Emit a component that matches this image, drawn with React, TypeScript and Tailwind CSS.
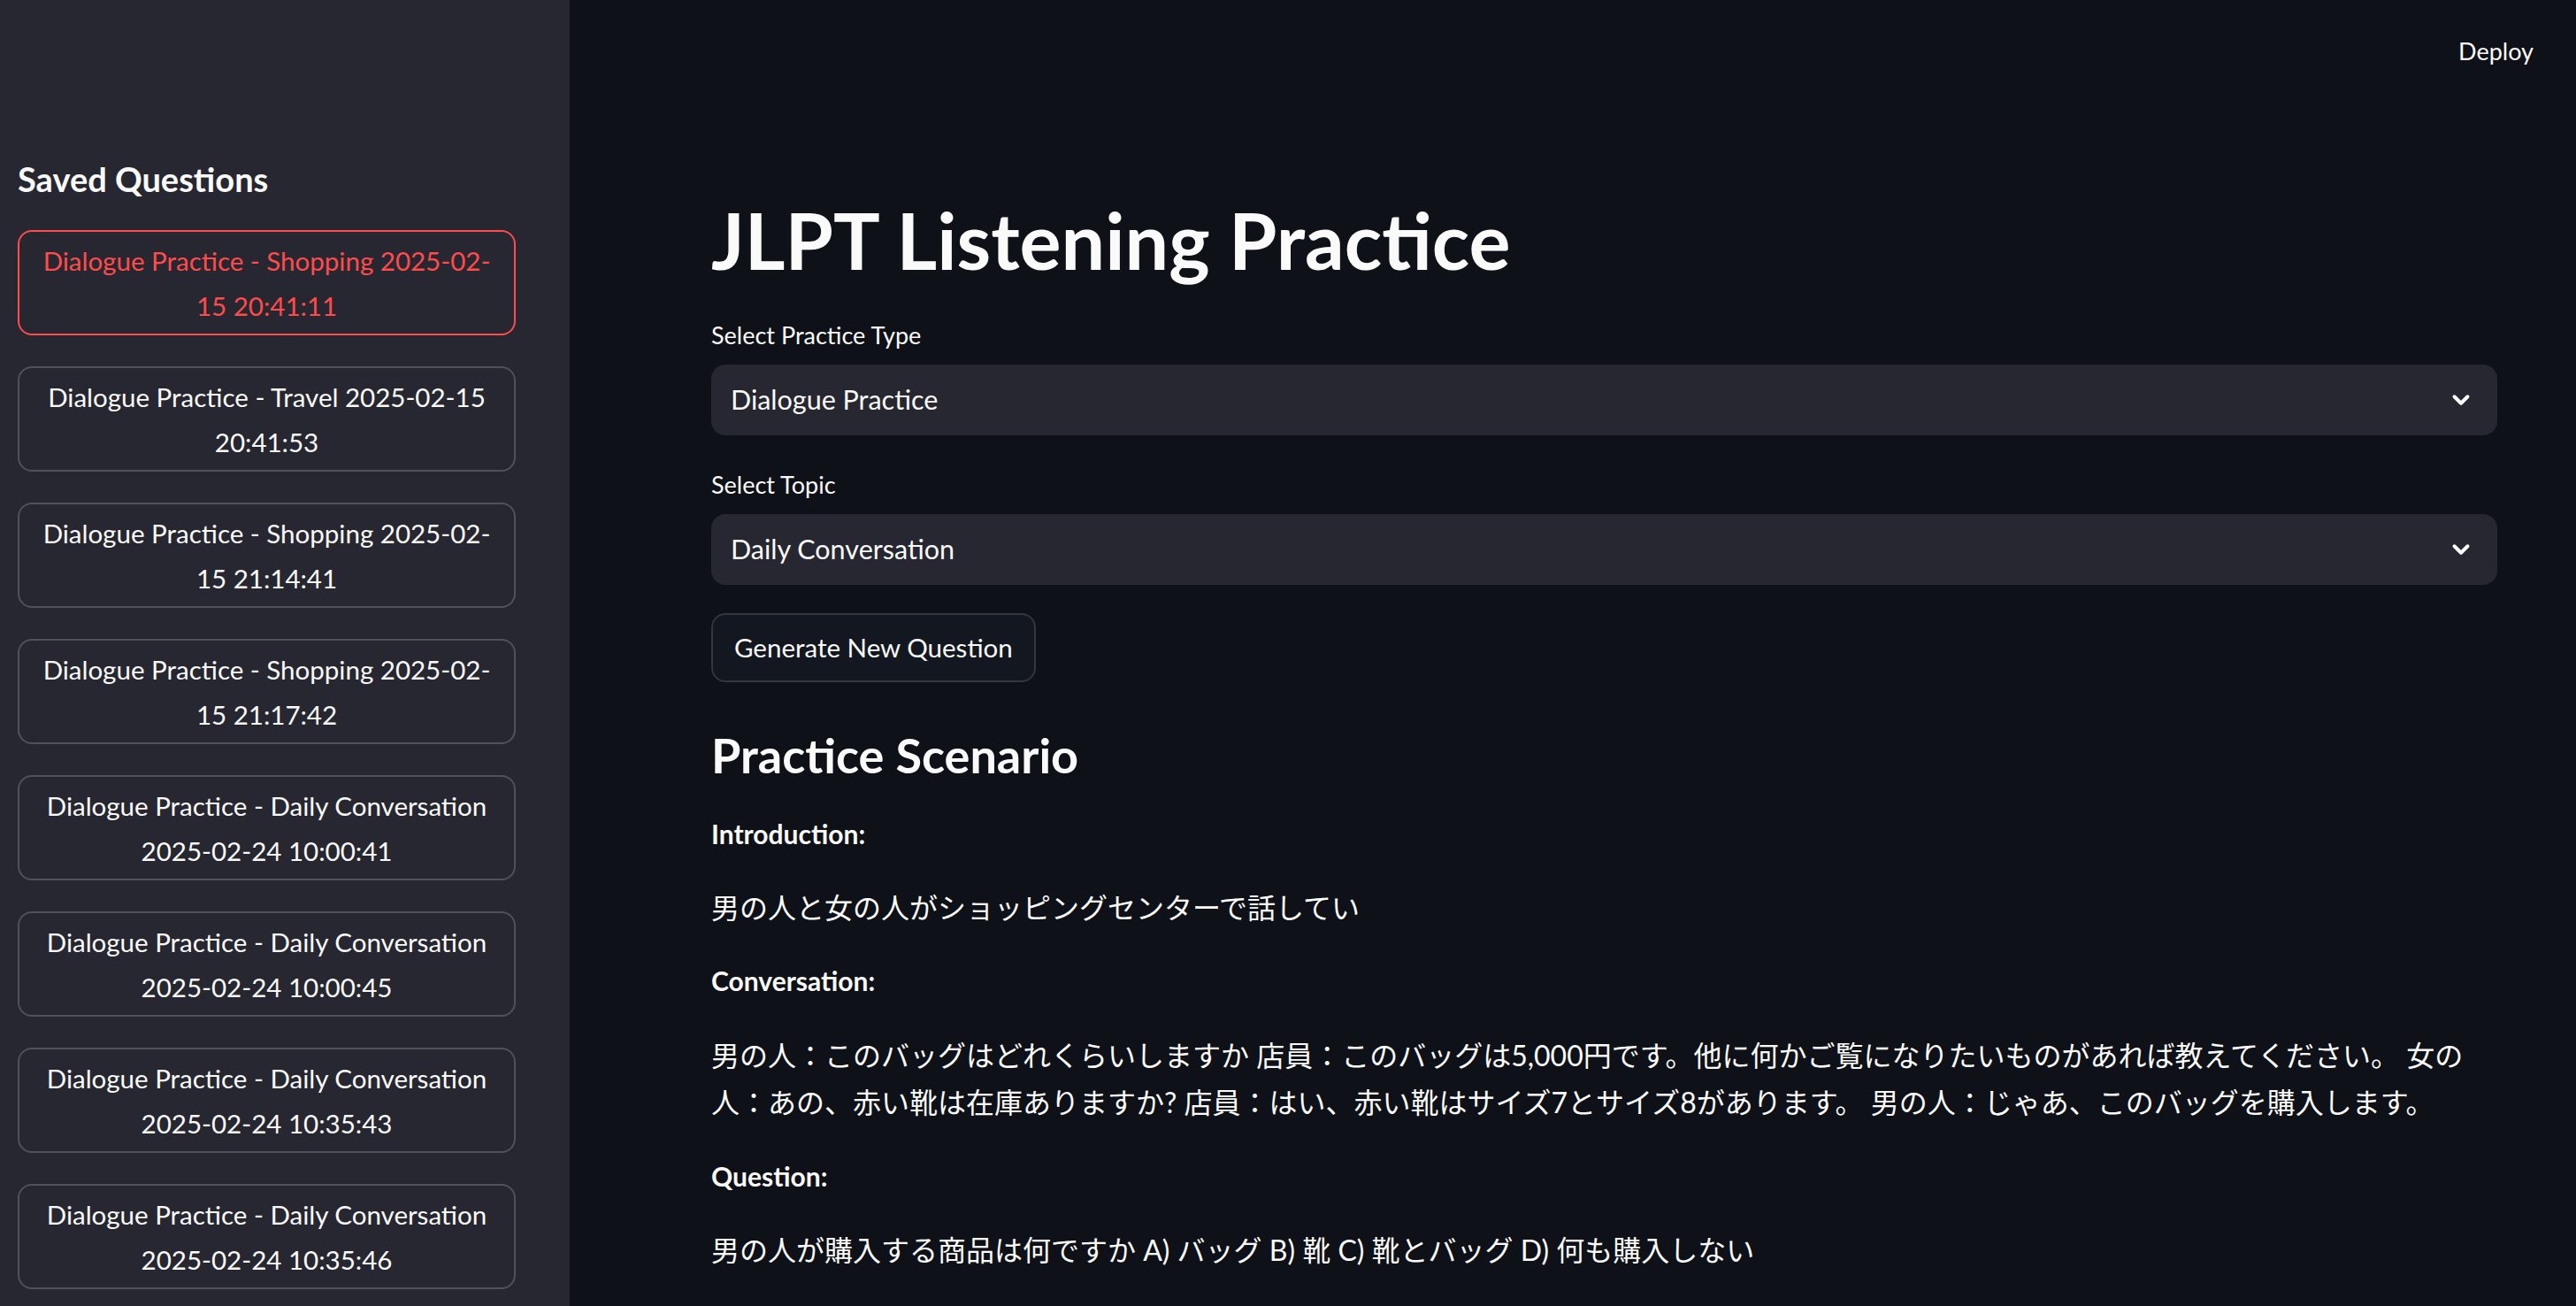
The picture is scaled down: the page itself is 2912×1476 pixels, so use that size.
import React from 'react';
import { ChevronDown } from 'lucide-react';

const saved = [
  ['Dialogue Practice - Shopping 2025-02-', '15 20:41:11'],
  ['Dialogue Practice - Travel 2025-02-15', '20:41:53'],
  ['Dialogue Practice - Shopping 2025-02-', '15 21:14:41'],
  ['Dialogue Practice - Shopping 2025-02-', '15 21:17:42'],
  ['Dialogue Practice - Daily Conversation', '2025-02-24 10:00:41'],
  ['Dialogue Practice - Daily Conversation', '2025-02-24 10:00:45'],
  ['Dialogue Practice - Daily Conversation', '2025-02-24 10:35:43'],
  ['Dialogue Practice - Daily Conversation', '2025-02-24 10:35:46'],
];

const font = "font-['Lato','Noto_Sans_CJK_JP',sans-serif]";

const Select: React.FC<{ label: string; value: string }> = ({ label, value }) => (
  <div className="flex flex-col">
    <div className="h-[40px] leading-[40px] text-[27px] text-[#fafafa]">{label}</div>
    <div className="mt-[13px] flex h-[80px] items-center justify-between rounded-[16px] bg-[#262730] pl-[22px] pr-[26px]">
      <span className="text-[30.5px] text-[#fafafa]">{value}</span>
      <ChevronDown className="h-[30px] w-[30px] text-[#fafafa]" strokeWidth={3.2} />
    </div>
  </div>
);

export default function App() {
  return (
    <div className={`flex h-[1476px] w-[2912px] overflow-hidden ${font}`}>
      <aside className="flex w-[644px] shrink-0 flex-col bg-[#262730] pl-[20px] pr-[61px]">
        <h3 className="mt-[178px] h-[48px] text-[38px] font-bold leading-[48px] text-[#fafafa]">
          Saved Questions
        </h3>
        <div className="mt-[34px] flex flex-col gap-[35px]">
          {saved.map(([a, b], i) => (
            <button
              key={i}
              className={`flex h-[119px] flex-col items-center justify-center rounded-[16px] border-2 bg-[#262730] px-[20px] text-[29.5px] leading-[51px] ${
                i === 0 ? 'border-[#ff4b4b] text-[#ff4b4b]' : 'border-[#50515a] text-[#fafafa]'
              }`}
            >
              <span className="whitespace-nowrap">{a}</span>
              <span className="whitespace-nowrap">{b}</span>
            </button>
          ))}
        </div>
      </aside>

      <main className="flex flex-1 flex-col bg-[#0e1117]">
        <header className="flex h-[120px] shrink-0 items-start justify-end pr-[48px] pt-[38px]">
          <span className="text-[27px] leading-[40px] text-[#fafafa]">Deploy</span>
        </header>

        <div className="flex flex-col pl-[160px] pr-[89px]">
          <h1 className="mt-[98px] h-[106px] text-[88px] font-bold leading-[106px] text-[#fafafa]">
            JLPT Listening Practice
          </h1>

          <div className="mt-[35px]">
            <Select label="Select Practice Type" value="Dialogue Practice" />
          </div>
          <div className="mt-[36px]">
            <Select label="Select Topic" value="Daily Conversation" />
          </div>

          <div className="mt-[32px]">
            <button className="h-[78px] rounded-[16px] border-2 border-[#33363e] bg-[#131720] px-[24px] text-[29.5px] text-[#fafafa]">
              Generate New Question
            </button>
          </div>

          <h2 className="mt-[49px] h-[67px] text-[54px] font-bold leading-[67px] text-[#fafafa]">
            Practice Scenario
          </h2>

          <div className="mt-[30px] flex flex-col gap-[32px] text-[30px] leading-[51px] text-[#fafafa]">
            <p className="font-bold">Introduction:</p>
            <p className="text-[32px]">男の人と女の人がショッピングセンターで話してい</p>
            <p className="font-bold">Conversation:</p>
            <p className="text-[32px] leading-[53px]">
              男の人：このバッグはどれくらいしますか 店員：このバッグは5,000円です。他に何かご覧になりたいものがあれば教えてください。 女の人：あの、赤い靴は在庫ありますか? 店員：はい、赤い靴はサイズ7とサイズ8があります。 男の人：じゃあ、このバッグを購入します。
            </p>
            <p className="font-bold">Question:</p>
            <p className="text-[32px]">男の人が購入する商品は何ですか A) バッグ B) 靴 C) 靴とバッグ D) 何も購入しない</p>
          </div>
        </div>
      </main>
    </div>
  );
}
